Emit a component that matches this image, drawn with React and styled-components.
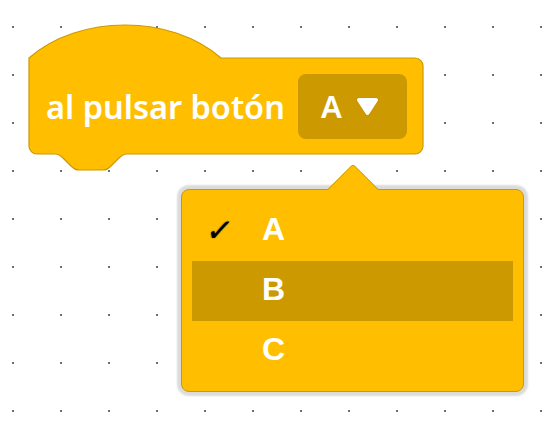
import React, { useState } from "react"
import styled, { createGlobalStyle } from "styled-components"

const GlobalStyle = createGlobalStyle`
  body {
    margin: 0;
    background: #ffffff;
    font-family: "Noto Sans", "Liberation Sans", sans-serif;
  }
`

const Canvas = styled.div`
  width: 555px;
  height: 424px;
  box-sizing: border-box;
  padding: 25px 0 0 29px;
  display: flex;
  flex-direction: column;
  background-color: #ffffff;
  background-image: radial-gradient(circle at center, #66707c 0.7px, transparent 1.3px);
  background-size: 48px 48px;
  background-position: -11px 3px;
  overflow: hidden;
`

const HatBlock = styled.div`
  position: relative;
  width: 394px;
  height: 146px;
`

const BlockShape = styled.svg`
  position: absolute;
  left: 0;
  top: 0;
  overflow: visible;
`

const BlockBody = styled.div`
  position: relative;
  margin-top: 33px;
  height: 96px;
  padding: 0 16px 0 17px;
  display: flex;
  align-items: center;
  justify-content: space-between;
`

const Label = styled.span`
  color: #ffffff;
  font-family: "Noto Sans", sans-serif;
  font-weight: 600;
  font-size: 32.5px;
  letter-spacing: 0;
`

const Field = styled.div`
  width: 109px;
  height: 65px;
  box-sizing: border-box;
  border-radius: 8px;
  background: #cc9900;
  display: flex;
  align-items: center;
  padding: 0 0 0 23px;
  gap: 13px;
`

const FieldText = styled.span`
  color: #ffffff;
  font-family: "Noto Sans", sans-serif;
  font-weight: 600;
  font-size: 31px;
`

const MenuWrap = styled.div`
  position: relative;
  margin: -6px 0 0 152px;
  padding-top: 24px;
  width: 343px;
`

const MenuArrow = styled.div`
  position: absolute;
  z-index: 2;
  left: 154px;
  top: 6px;
  width: 36px;
  height: 36px;
  box-sizing: border-box;
  background: #ffbf00;
  border-top: 1px solid #cc9900;
  border-left: 1px solid #cc9900;
  border-top-left-radius: 4px;
  transform: rotate(45deg);
`

const Menu = styled.div`
  position: relative;
  width: 343px;
  height: 203px;
  box-sizing: border-box;
  padding: 11px 10px;
  background: #ffbf00;
  border: 1px solid #cc9900;
  border-radius: 8px;
  box-shadow: 0 0 2px 4px rgba(0, 0, 0, 0.14);
`

const Item = styled.div`
  height: 60px;
  display: flex;
  align-items: center;
  padding-bottom: 3px;
  box-sizing: border-box;
  background: ${props => props.highlighted ? "#cc9900" : "transparent"};
`

const Check = styled.span`
  width: 70px;
  box-sizing: border-box;
  padding-left: 15px;
  color: #000000;
  font-family: "DejaVu Sans", sans-serif;
  font-weight: 700;
  font-size: 31px;
  text-shadow: 0 0 1.5px rgba(0, 0, 0, 0.7);
  transform: skewX(-10deg);
`

const ItemText = styled.span`
  color: #ffffff;
  font-family: "Liberation Sans", Arial, sans-serif;
  font-weight: 700;
  font-size: 32px;
`

function DropArrow() {
    return (
        <svg width="25" height="21" viewBox="0 0 25 21">
            <path d="M4 4 H21 L12.5 17 Z" fill="#ffffff" stroke="#b88a00" strokeWidth="6" strokeLinejoin="round" opacity="0.3" />
            <path d="M4 4 H21 L12.5 17 Z" fill="#ffffff" stroke="#ffffff" strokeWidth="4" strokeLinejoin="round" />
        </svg>
    )
}

const hatPath =
    "M 0 33 C 50 -11 142 -11 192 33 H 386 A 8 8 0 0 1 394 41 V 121 A 8 8 0 0 1 386 129 H 98 " +
    "c -4 0 -6 2 -8 4 l -8 8 c -2 2 -4 4 -8 4 h -24 c -4 0 -6 -2 -8 -4 l -8 -8 c -2 -2 -4 -4 -8 -4 " +
    "H 8 A 8 8 0 0 1 0 121 Z"

const options = ["A", "B", "C"]

function App() {
    const [selected] = useState("A")
    const [hover] = useState("B")

    return (
        <Canvas>
            <GlobalStyle />
            <HatBlock>
                <BlockShape width="394" height="146" viewBox="0 0 394 146">
                    <path d={hatPath} fill="#ffbf00" stroke="#cc9900" strokeWidth="1.2" />
                </BlockShape>
                <BlockBody>
                    <Label>al pulsar botón</Label>
                    <Field>
                        <FieldText>{selected}</FieldText>
                        <DropArrow />
                    </Field>
                </BlockBody>
            </HatBlock>
            <MenuWrap>
                <MenuArrow />
                <Menu>
                    {options.map(o => (
                        <Item key={o} highlighted={o === hover}>
                            <Check>{o === selected ? "✓" : ""}</Check>
                            <ItemText>{o}</ItemText>
                        </Item>
                    ))}
                </Menu>
            </MenuWrap>
        </Canvas>
    )
}

export default App
